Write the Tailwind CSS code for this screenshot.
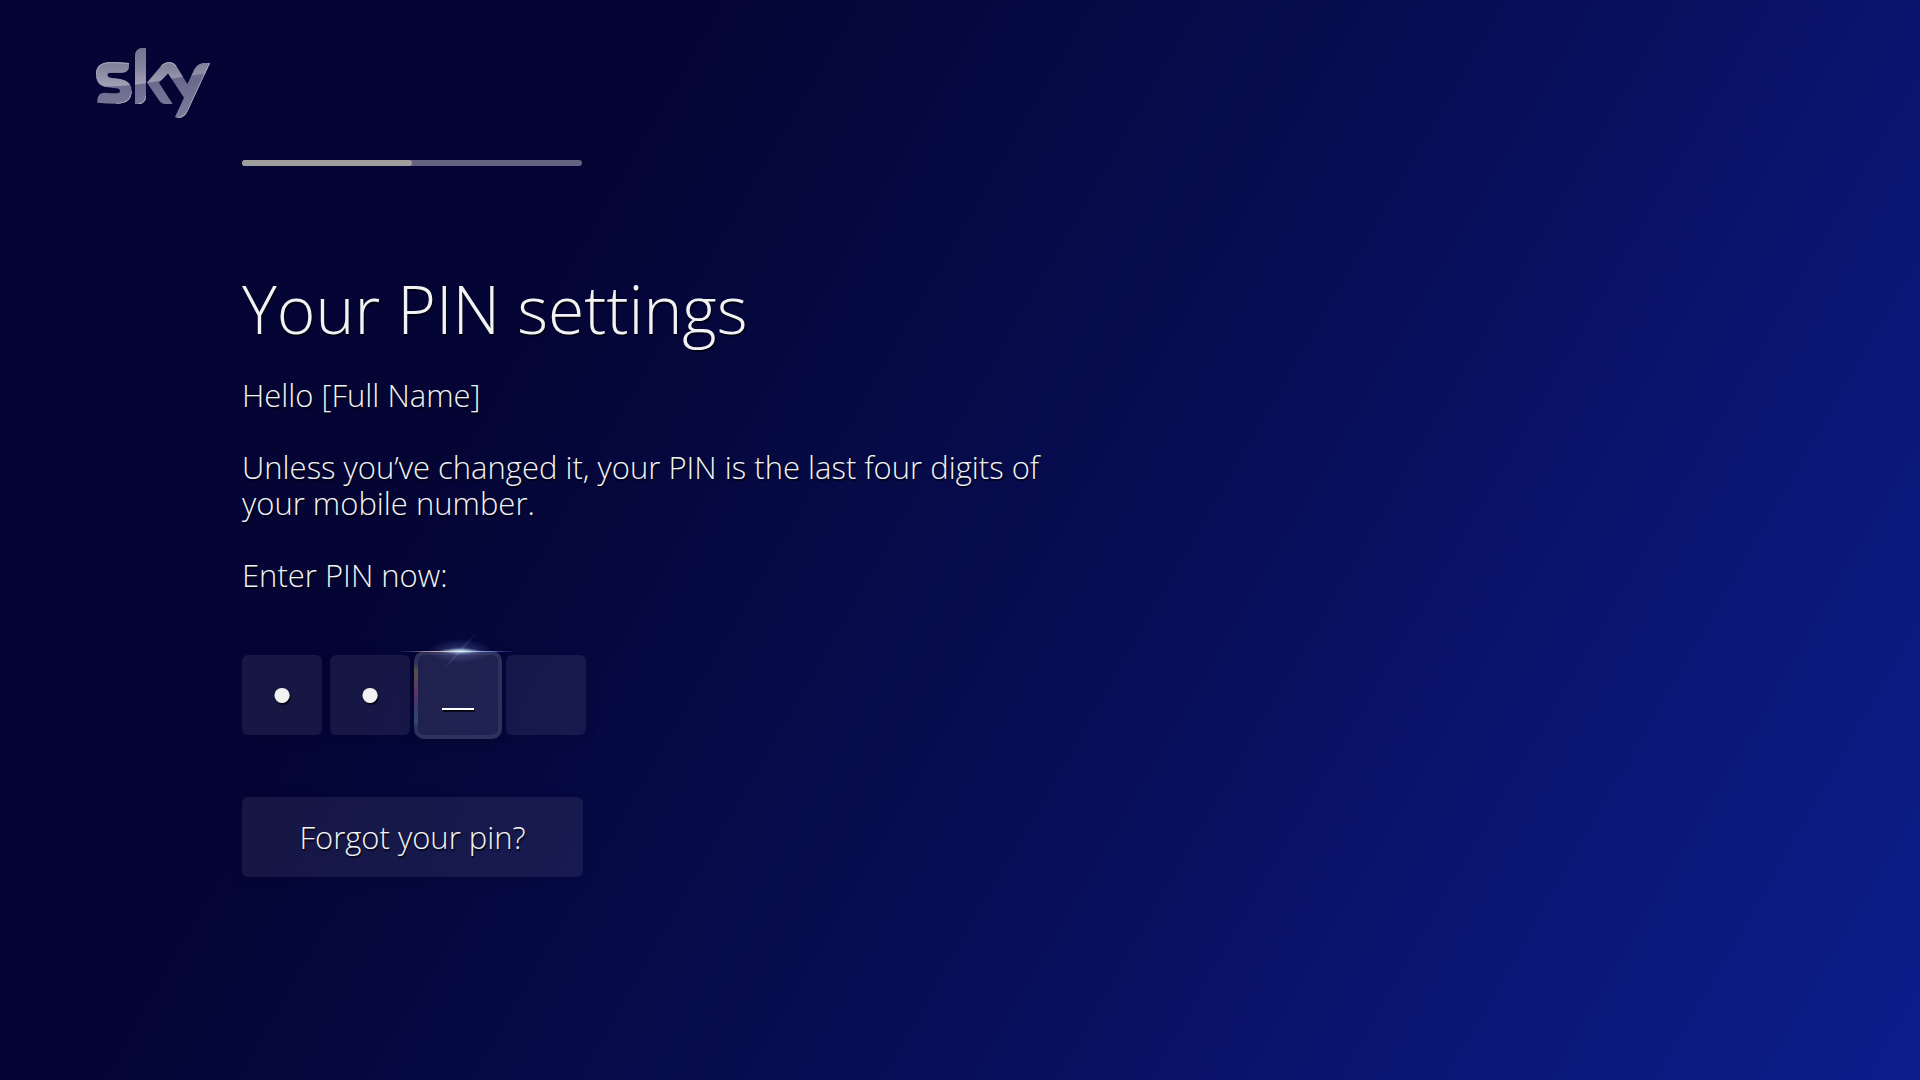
<!DOCTYPE html>
<html lang="en">
<head>
<meta charset="utf-8">
<meta name="viewport" content="width=device-width, initial-scale=1">
<title>Your PIN settings</title>
<script src="https://cdn.jsdelivr.net/npm/@tailwindcss/browser@4"></script>
</head>
<body class="min-h-screen bg-[linear-gradient(120deg,#040535_0%,#040535_28%,#060a45_44%,#080e58_61%,#0a1570_77%,#0c1e8c_100%)] font-['Open_Sans','Noto_Sans',sans-serif] font-light text-[#f2f2f2]">
<header class="px-24 pt-12">
  <svg class="h-[70px] w-[114px]" viewBox="48 39 342 210" role="img" aria-label="Sky">
    <defs>
      <linearGradient id="base" x1="0" y1="39" x2="0" y2="249" gradientUnits="userSpaceOnUse">
        <stop offset="0" stop-color="#8c8ba4"/><stop offset=".45" stop-color="#6a698c"/><stop offset="1" stop-color="#7d7c9b"/>
      </linearGradient>
      <linearGradient id="shine" x1="0" y1="39" x2="0" y2="155" gradientUnits="userSpaceOnUse">
        <stop offset="0" stop-color="#74738f"/><stop offset=".5" stop-color="#85849e"/><stop offset="1" stop-color="#a3a2b6"/>
      </linearGradient>
      <clipPath id="mark">
        <path d="M147 84V94Q146 113 125 113H92Q82 113 82 120Q82 127 94 129L120 132Q155 138 155 168Q155 206 110 206Q80 206 52 203V195Q54 173 74 173Q90 175 108 175Q120 175 120 168Q120 161 108 160L82 157Q48 152 48 118Q48 82 92 82Q120 82 147 84Z"/>
        <path d="M165 62Q166 39 190 39H198V185Q196 207 175 207H165Z"/>
        <path d="M201 143L243 94Q252 82 267 82Q282 82 290 95L322 147L344 102Q354 84 376 84H390L324 226Q314 249 295 249Q289 249 285 246L312 188L264 115L237 143L278 207H260Q245 207 238 197Z"/>
      </clipPath>
    </defs>
    <g clip-path="url(#mark)">
      <path d="M40 30H400V260H40Z" fill="url(#base)"/>
      <path d="M40 30H400V112Q300 126 235 138Q140 157 40 155Z" fill="url(#shine)"/>
      <path d="M155 168Q155 206 110 206M198 185Q196 207 175 207M147 84Q120 82 92 82Q48 82 48 118M243 94Q252 82 267 82Q282 82 290 95M390 84L324 226Q314 249 295 249" fill="none" stroke="#b9b8c8" stroke-width="4"/>
    </g>
  </svg>
</header>
<main class="flex max-w-[1120px] flex-col items-start pr-6 pl-[242px] [text-shadow:1px_2px_1px_#000a]">
  <div class="mt-[42px] h-1.5 w-[340px] overflow-hidden rounded-full bg-[#646382]" role="progressbar" aria-label="Setup progress" aria-valuenow="50" aria-valuemin="0" aria-valuemax="100">
    <div class="h-full w-1/2 rounded-r-full bg-[#a19f9e]"></div>
  </div>
  <h1 class="mt-[102px] text-[66px] leading-[80px]">Your PIN settings</h1>
  <div class="mt-[29px] flex flex-col gap-9 text-[31px] leading-9">
    <p>Hello [Full Name]</p>
    <p>Unless you’ve changed it, your PIN is the last four digits of<br>your mobile number.</p>
    <p id="pin-label">Enter PIN now:</p>
  </div>
  <div class="mt-[58px] flex h-[88px] items-center" role="group" aria-labelledby="pin-label">
    <div class="flex gap-2">
      <input class="size-20 rounded-md bg-white/7 text-center font-['Liberation_Sans',sans-serif] text-[56px] text-[#f2f2f2] shadow-[0_2px_12px_#0002] outline-none [text-shadow:1px_2px_1px_#000a]" type="password" maxlength="1" value="0" aria-label="PIN digit 1">
      <input class="size-20 rounded-md bg-white/7 text-center font-['Liberation_Sans',sans-serif] text-[56px] text-[#f2f2f2] shadow-[0_2px_12px_#0002] outline-none [text-shadow:1px_2px_1px_#000a]" type="password" maxlength="1" value="0" aria-label="PIN digit 2">
    </div>
    <div class="relative mx-1">
      <input class="block size-[88px] rounded-[10px] border-4 border-white/7 bg-white/11 text-center font-['Liberation_Sans',sans-serif] text-[56px] shadow-[0_4px_12px_#0003] outline-none" type="password" maxlength="1" aria-label="PIN digit 3">
      <span class="absolute top-[57px] left-7 h-0.5 w-8 bg-white shadow-[1px_2px_0_#000b]"></span>
      <span class="absolute top-3 left-0 h-16 w-1 bg-[linear-gradient(#77703800,#77703888_12%,#8a327088_50%,#3d4e9066_75%,#2f6b9077_92%,#2f6b9000)]"></span>
      <svg class="pointer-events-none absolute -top-8 -left-5 h-16 w-32" viewBox="0 0 128 64" aria-hidden="true">
        <defs>
          <radialGradient id="glow"><stop offset="0" stop-color="#b8d4ff" stop-opacity=".5"/><stop offset=".4" stop-color="#8fa6e8" stop-opacity=".2"/><stop offset="1" stop-color="#8fa6e8" stop-opacity="0"/></radialGradient>
          <radialGradient id="core"><stop offset="0" stop-color="#d8f0e4"/><stop offset=".35" stop-color="#a9c8da" stop-opacity=".8"/><stop offset="1" stop-color="#a5b4e8" stop-opacity="0"/></radialGradient>
          <linearGradient id="line"><stop offset="0" stop-color="#8a9fd0" stop-opacity="0"/><stop offset=".3" stop-color="#d8b8bc" stop-opacity=".8"/><stop offset=".55" stop-color="#d8f4e8"/><stop offset=".72" stop-color="#829cf0" stop-opacity=".9"/><stop offset="1" stop-color="#6f86e0" stop-opacity="0"/></linearGradient>
          <radialGradient id="ray"><stop offset="0" stop-color="#c9d6ff" stop-opacity=".16"/><stop offset="1" stop-color="#c9d6ff" stop-opacity="0"/></radialGradient>
        </defs>
        <ellipse cx="66" cy="32" rx="32" ry="12" fill="url(#glow)"/>
        <ellipse cx="66" cy="32" rx="22" ry="3" fill="url(#core)"/>
        <path d="M4 32H122V33H4Z" fill="url(#line)"/>
        <ellipse cx="66" cy="32" rx="27" ry="2" fill="url(#ray)" transform="rotate(-48 66 32)"/>
      </svg>
    </div>
    <input class="size-20 rounded-md bg-white/7 text-center font-['Liberation_Sans',sans-serif] text-[56px] shadow-[0_2px_12px_#0002] outline-none" type="password" maxlength="1" aria-label="PIN digit 4">
  </div>
  <button class="mt-[58px] h-20 w-[341px] rounded-md bg-white/7 text-[31px] leading-9 shadow-[0_2px_12px_#0002] [text-shadow:1px_2px_1px_#000a]" type="button">Forgot your pin?</button>
</main>
</body>
</html>
